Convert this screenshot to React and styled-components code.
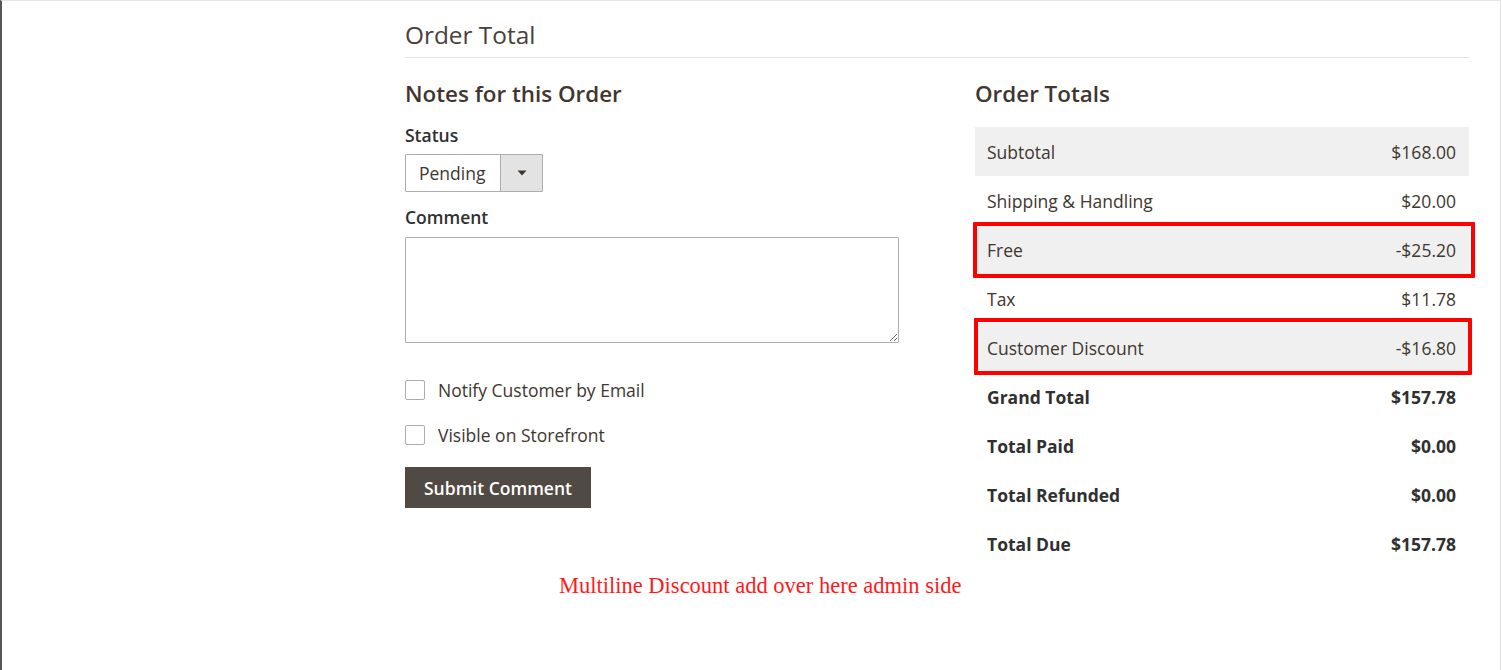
import React from "react";
import styled, { createGlobalStyle } from "styled-components";

const Global = createGlobalStyle`
  html, body { margin: 0; padding: 0; background: #fff; }
  body { font-family: "Open Sans", "Noto Sans", sans-serif; color: #41362f; }
  * { box-sizing: border-box; }
`;

const Frame = styled.div`
  width: 1501px;
  height: 670px;
  border-left: 2px solid #565656;
  border-top: 1px solid #e6e6e6;
  border-right: 1px solid #e2e2e2;
  padding: 19px 0 0 403px;
  overflow: hidden;
`;

const Section = styled.section`
  width: 1064px;
`;

const SectionTitle = styled.h1`
  margin: 0;
  font-size: 24.4px;
  line-height: 29px;
  font-weight: 400;
  color: #4a403a;
  padding-bottom: 8px;
  border-bottom: 1px solid #e3e3e3;
`;

const Columns = styled.div`
  display: grid;
  grid-template-columns: 494px 494px;
  column-gap: 76px;
  margin-top: 23px;
`;

const Column = styled.div`
  display: flex;
  flex-direction: column;
  align-items: flex-start;
`;

const ColumnTitle = styled.h2`
  margin: 0;
  font-size: 22.4px;
  line-height: 26px;
  font-weight: 600;
  color: #41362f;
`;

const Label = styled.label`
  display: block;
  font-size: 17.5px;
  line-height: 21px;
  font-weight: 600;
  color: #303030;
  margin-top: ${(p) => p.$top}px;
`;

const Select = styled.div`
  margin-top: 8px;
  display: flex;
  height: 38px;
  border: 1px solid #adadad;
  border-radius: 1px;
  background: #fff;
`;

const SelectValue = styled.span`
  display: flex;
  align-items: center;
  padding: 0 15px 0 13px;
  font-size: 17.5px;
  color: #41362f;
`;

const SelectButton = styled.span`
  width: 42px;
  display: flex;
  align-items: center;
  justify-content: center;
  background: #e3e3e3;
  border-left: 1px solid #adadad;
`;

const TextArea = styled.textarea`
  margin-top: 9px;
  width: 494px;
  height: 106px;
  border: 1px solid #adadad;
  border-radius: 1px;
  resize: both;
  font-family: inherit;
`;

const CheckRow = styled.label`
  display: flex;
  align-items: center;
  gap: 13px;
  height: 24px;
  margin-top: ${(p) => p.$top}px;
  font-size: 17.5px;
  color: #41362f;
`;

const Box = styled.span`
  width: 20px;
  height: 20px;
  border: 1px solid #adadad;
  border-radius: 2px;
  background: #fff;
`;

const Button = styled.button`
  margin-top: 20px;
  height: 41px;
  padding: 0 18px;
  background: #514943;
  border: 1px solid #514943;
  color: #fff;
  font-family: inherit;
  font-size: 17.5px;
  font-weight: 600;
  border-radius: 0;
`;

const Totals = styled.div`
  margin-top: 20px;
  width: 494px;
  display: flex;
  flex-direction: column;
`;

const Row = styled.div`
  position: relative;
  height: 49px;
  display: flex;
  align-items: center;
  justify-content: space-between;
  padding: 1px 13px 0 12px;
  background: ${(p) => (p.$shade ? "#f0f0f0" : "transparent")};
  font-size: 17.5px;
  font-weight: ${(p) => (p.$strong ? 700 : 400)};
  color: ${(p) => (p.$strong ? "#303030" : "#41362f")};
`;

const Highlight = styled.span`
  position: absolute;
  top: ${(p) => p.$t}px;
  left: ${(p) => p.$l}px;
  right: ${(p) => p.$r}px;
  bottom: ${(p) => p.$b}px;
  border: 4px solid #ff0000;
  border-radius: 1px;
  pointer-events: none;
`;

const Note = styled.p`
  margin: 4px 0 0 154px;
  font-family: "Liberation Serif", "Times New Roman", serif;
  font-size: 22.5px;
  line-height: 27px;
  color: #ff1a1a;
`;

const rows = [
  { label: "Subtotal", value: "$168.00", shade: true },
  { label: "Shipping & Handling", value: "$20.00" },
  { label: "Free", value: "-$25.20", shade: true, hl: { t: -3, l: -2, r: -6, b: -4 } },
  { label: "Tax", value: "$11.78" },
  { label: "Customer Discount", value: "-$16.80", shade: true, hl: { t: -5, l: -1, r: -3, b: -3 } },
  { label: "Grand Total", value: "$157.78", strong: true },
  { label: "Total Paid", value: "$0.00", strong: true },
  { label: "Total Refunded", value: "$0.00", strong: true },
  { label: "Total Due", value: "$157.78", strong: true },
];

export default function App() {
  return (
    <>
      <Global />
      <Frame>
        <Section>
          <SectionTitle>Order Total</SectionTitle>
          <Columns>
            <Column>
              <ColumnTitle>Notes for this Order</ColumnTitle>
              <Label $top={18}>Status</Label>
              <Select>
                <SelectValue>Pending</SelectValue>
                <SelectButton>
                  <svg width="10" height="6" viewBox="0 0 10 6">
                    <path d="M0.5 0.5 L9.5 0.5 L5 5.5 Z" fill="#41362f" />
                  </svg>
                </SelectButton>
              </Select>
              <Label $top={15}>Comment</Label>
              <TextArea />
              <CheckRow $top={35}>
                <Box />
                Notify Customer by Email
              </CheckRow>
              <CheckRow $top={21}>
                <Box />
                Visible on Storefront
              </CheckRow>
              <Button>Submit Comment</Button>
            </Column>
            <Column>
              <ColumnTitle>Order Totals</ColumnTitle>
              <Totals>
                {rows.map((r) => (
                  <Row key={r.label} $shade={r.shade} $strong={r.strong}>
                    <span>{r.label}</span>
                    <span>{r.value}</span>
                    {r.hl && <Highlight $t={r.hl.t} $l={r.hl.l} $r={r.hl.r} $b={r.hl.b} />}
                  </Row>
                ))}
              </Totals>
            </Column>
          </Columns>
          <Note>Multiline Discount add over here admin side</Note>
        </Section>
      </Frame>
    </>
  );
}
